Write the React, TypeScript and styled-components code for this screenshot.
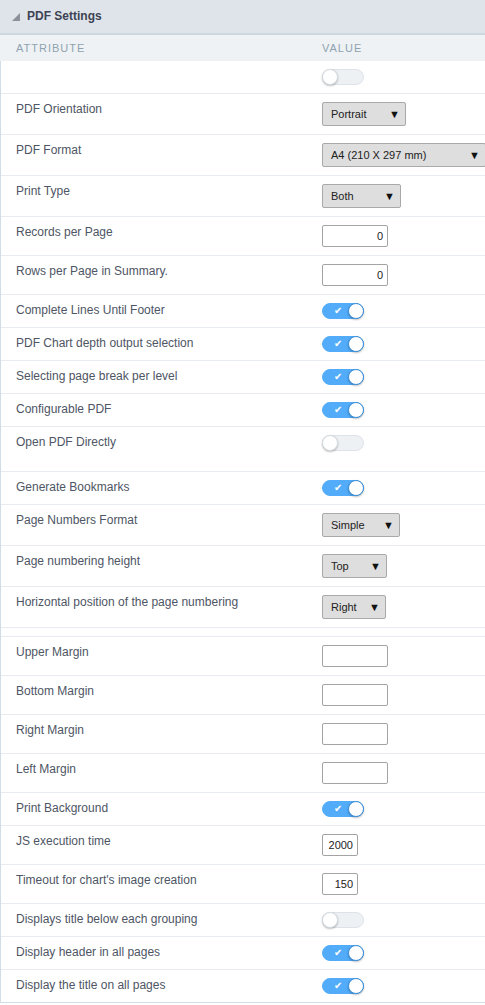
import React from "react";
import styled, { createGlobalStyle } from "styled-components";

const GlobalStyle = createGlobalStyle`
  html, body {
    margin: 0;
    padding: 0;
    background: #ffffff;
    font-family: "Liberation Sans", Arial, sans-serif;
  }
`;

type Control =
  | { kind: "toggle"; on: boolean }
  | { kind: "select"; value: string; width: number }
  | { kind: "input"; value: string; width: number }
  | { kind: "none" };

interface Setting {
  label: string;
  control: Control;
  tall?: boolean;
}

const settings: Setting[] = [
  { label: "", control: { kind: "toggle", on: false } },
  { label: "PDF Orientation", control: { kind: "select", value: "Portrait", width: 84 } },
  { label: "PDF Format", control: { kind: "select", value: "A4 (210 X 297 mm)", width: 164 } },
  { label: "Print Type", control: { kind: "select", value: "Both", width: 79 } },
  { label: "Records per Page", control: { kind: "input", value: "0", width: 66 } },
  { label: "Rows per Page in Summary.", control: { kind: "input", value: "0", width: 66 } },
  { label: "Complete Lines Until Footer", control: { kind: "toggle", on: true } },
  { label: "PDF Chart depth output selection", control: { kind: "toggle", on: true } },
  { label: "Selecting page break per level", control: { kind: "toggle", on: true } },
  { label: "Configurable PDF", control: { kind: "toggle", on: true } },
  { label: "Open PDF Directly", control: { kind: "toggle", on: false }, tall: true },
  { label: "Generate Bookmarks", control: { kind: "toggle", on: true } },
  { label: "Page Numbers Format", control: { kind: "select", value: "Simple", width: 78 } },
  { label: "Page numbering height", control: { kind: "select", value: "Top", width: 65 } },
  { label: "Horizontal position of the page numbering", control: { kind: "select", value: "Right", width: 64 } },
  { label: "", control: { kind: "none" } },
  { label: "Upper Margin", control: { kind: "input", value: "", width: 66 } },
  { label: "Bottom Margin", control: { kind: "input", value: "", width: 66 } },
  { label: "Right Margin", control: { kind: "input", value: "", width: 66 } },
  { label: "Left Margin", control: { kind: "input", value: "", width: 66 } },
  { label: "Print Background", control: { kind: "toggle", on: true } },
  { label: "JS execution time", control: { kind: "input", value: "2000", width: 36 } },
  { label: "Timeout for chart's image creation", control: { kind: "input", value: "150", width: 36 } },
  { label: "Displays title below each grouping", control: { kind: "toggle", on: false } },
  { label: "Display header in all pages", control: { kind: "toggle", on: true } },
  { label: "Display the title on all pages", control: { kind: "toggle", on: true } },
];

const Panel = styled.div`
  width: 485px;
  overflow: hidden;
`;

const Header = styled.div`
  height: 33px;
  display: flex;
  align-items: center;
  gap: 7px;
  padding-left: 12px;
  background: #dfe4eb;
  border-bottom: 2px solid #cdd7df;
`;

const Title = styled.span`
  font-size: 12px;
  font-weight: bold;
  color: #3d4352;
  margin-top: -2px;
`;

const ColumnHead = styled.div`
  display: grid;
  grid-template-columns: 306px 1fr;
  height: 26px;
  align-items: center;
  padding-left: 16px;
  background: #eef2f5;
  font-size: 11px;
  letter-spacing: 1px;
  color: #8ea2af;
`;

const Body = styled.div`
  border-left: 1px solid #d3dde5;
  border-bottom: 1px solid #d3dde5;
`;

const Row = styled.div<{ $tall?: boolean; $spacer?: boolean }>`
  display: grid;
  grid-template-columns: 306px 1fr;
  padding: ${(p) => (p.$spacer ? "4px 0 4px 15px" : p.$tall ? "8px 0 20px 15px" : "8px 0 8px 15px")};
  border-bottom: 1px solid #e8ecf1;
  &:last-child {
    border-bottom: none;
  }
`;

const Label = styled.div`
  font-size: 12px;
  line-height: 15px;
  color: #4e5564;
`;

const Value = styled.div`
  display: flex;
  align-items: flex-start;
  white-space: nowrap;
`;

const Track = styled.span<{ $on: boolean }>`
  position: relative;
  display: inline-block;
  box-sizing: border-box;
  width: 42px;
  height: 16px;
  border-radius: 8px;
  background: ${(p) => (p.$on ? "#52acf9" : "#eef1f4")};
  border: 1px solid ${(p) => (p.$on ? "#52acf9" : "#dde3e8")};
`;

const Knob = styled.span<{ $on: boolean }>`
  position: absolute;
  top: -1px;
  left: ${(p) => (p.$on ? "25px" : "-1px")};
  box-sizing: border-box;
  width: 16px;
  height: 16px;
  border-radius: 50%;
  background: #ffffff;
  border: 1px solid ${(p) => (p.$on ? "#3d8fd8" : "#d5dbe0")};
  box-shadow: 0 1px 2px rgba(0, 0, 0, 0.25);
`;

const Check = styled.span`
  position: absolute;
  left: 11px;
  top: 0;
  font-size: 10px;
  line-height: 14px;
  color: #ffffff;
`;

const SelectBox = styled.div`
  box-sizing: border-box;
  height: 24px;
  display: flex;
  align-items: center;
  justify-content: space-between;
  padding: 0 5px 0 8px;
  background: #dedede;
  border: 1px solid #a9a9a9;
  border-radius: 2px;
  font-size: 11px;
  color: #222222;
`;

const Arrow = styled.span`
  font-size: 11px;
  color: #111111;
`;

const InputBox = styled.div`
  box-sizing: border-box;
  height: 22px;
  display: flex;
  align-items: center;
  justify-content: flex-end;
  padding-right: 4px;
  background: #ffffff;
  border: 1px solid #a3a3a3;
  border-radius: 2px;
  font-size: 11px;
  color: #222222;
`;

const Toggle = ({ on }: { on: boolean }) => (
  <Track $on={on}>
    {on && <Check>✔</Check>}
    <Knob $on={on} />
  </Track>
);

const renderControl = (c: Control) => {
  switch (c.kind) {
    case "toggle":
      return <Toggle on={c.on} />;
    case "select":
      return (
        <SelectBox style={{ width: c.width }}>
          <span>{c.value}</span>
          <Arrow>▼</Arrow>
        </SelectBox>
      );
    case "input":
      return <InputBox style={{ width: c.width }}>{c.value}</InputBox>;
    default:
      return null;
  }
};

export default function App() {
  return (
    <>
      <GlobalStyle />
      <Panel>
        <Header>
          <svg width="8" height="8" viewBox="0 0 8 8">
            <polygon points="8,0 8,8 0,8" fill="#8b919b" />
          </svg>
          <Title>PDF Settings</Title>
        </Header>
        <ColumnHead>
          <span>ATTRIBUTE</span>
          <span>VALUE</span>
        </ColumnHead>
        <Body>
          {settings.map((s, i) => (
            <Row key={i} $tall={s.tall} $spacer={s.control.kind === "none"}>
              <Label>{s.label}</Label>
              <Value>{renderControl(s.control)}</Value>
            </Row>
          ))}
        </Body>
      </Panel>
    </>
  );
}
